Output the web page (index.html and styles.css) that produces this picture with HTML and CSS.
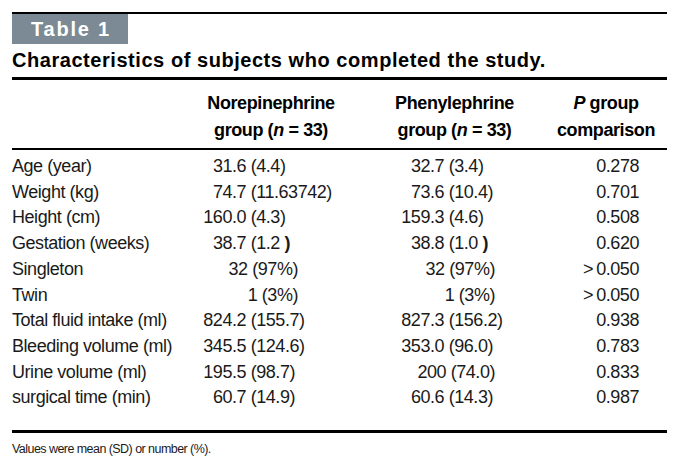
FILE: index.html
```html
<!DOCTYPE html>
<html lang="en">
<head>
<meta charset="utf-8">
<title>Table 1</title>
<link rel="stylesheet" href="styles.css">
</head>
<body>
<div class="page">
  <div class="topbar"><span class="tag">Table 1</span></div>
  <h1 class="title">Characteristics of subjects who completed the study.</h1>
  <table class="data">
    <colgroup>
      <col class="c-label"><col class="c-nor"><col class="c-phe"><col class="c-pv">
    </colgroup>
    <thead>
      <tr>
        <th class="h-label"></th>
        <th class="h-nor">Norepinephrine<br>group (<i>n</i> = 33)</th>
        <th class="h-phe">Phenylephrine<br>group (<i>n</i> = 33)</th>
        <th class="h-pv"><i>P</i> group<br>comparison</th>
      </tr>
    </thead>
    <tbody>
      <tr class="first"><td class="lbl">Age (year)</td><td class="num"><span class="i">31</span>.6 (4.4)</td><td class="num"><span class="i">32</span>.7 (3.4)</td><td class="pv">0.278</td></tr>
      <tr><td class="lbl">Weight (kg)</td><td class="num"><span class="i">74</span>.7 (11.63742)</td><td class="num"><span class="i">73</span>.6 (10.4)</td><td class="pv">0.701</td></tr>
      <tr><td class="lbl">Height (cm)</td><td class="num"><span class="i">160</span>.0 (4.3)</td><td class="num"><span class="i">159</span>.3 (4.6)</td><td class="pv">0.508</td></tr>
      <tr><td class="lbl">Gestation (weeks)</td><td class="num"><span class="i">38</span>.7 (1.2 <span class="par">)</span></td><td class="num"><span class="i">38</span>.8 (1.0 <span class="par">)</span></td><td class="pv">0.620</td></tr>
      <tr><td class="lbl">Singleton</td><td class="cnt-nor">32 (97%)</td><td class="cnt-phe">32 (97%)</td><td class="pv">&gt;&#8201;0.050</td></tr>
      <tr><td class="lbl">Twin</td><td class="cnt-nor">1 (3%)</td><td class="cnt-phe">1 (3%)</td><td class="pv">&gt;&#8201;0.050</td></tr>
      <tr><td class="lbl">Total fluid intake (ml)</td><td class="num"><span class="i">824</span>.2 (155.7)</td><td class="num"><span class="i">827</span>.3 (156.2)</td><td class="pv">0.938</td></tr>
      <tr><td class="lbl">Bleeding volume (ml)</td><td class="num"><span class="i">345</span>.5 (124.6)</td><td class="num"><span class="i">353</span>.0 (96.0)</td><td class="pv">0.783</td></tr>
      <tr><td class="lbl">Urine volume (ml)</td><td class="num"><span class="i">195</span>.5 (98.7)</td><td class="cnt-phe">200 (74.0)</td><td class="pv">0.833</td></tr>
      <tr class="last"><td class="lbl">surgical time (min)</td><td class="num"><span class="i">60</span>.7 (14.9)</td><td class="num"><span class="i">60</span>.6 (14.3)</td><td class="pv">0.987</td></tr>
    </tbody>
  </table>
  <p class="note">Values were mean (SD) or number (%).</p>
</div>
</body>
</html>
```

FILE: styles.css
```css
html, body {
  margin: 0;
  padding: 0;
  background: #ffffff;
}

.page {
  width: 655px;
  padding: 12px 0 0 12px;
  color: #111111;
  font-family: "Liberation Sans", Arial, sans-serif;
}

.topbar {
  border-top: 2px solid #000000;
  display: flex;
}

.tag {
  display: block;
  width: 116px;
  height: 30px;
  box-sizing: border-box;
  padding-left: 19px;
  background: #7b8a94;
  color: #ffffff;
  font-weight: 700;
  font-size: 20px;
  letter-spacing: 1.8px;
  line-height: 30px;
}

.title {
  margin: 0;
  height: 33px;
  line-height: 33px;
  font-weight: 700;
  font-size: 20px;
  letter-spacing: 0.55px;
  color: #000000;
  border-bottom: 3px solid #000000;
}

.data {
  width: 655px;
  table-layout: fixed;
  border-collapse: collapse;
  font-size: 18px;
  letter-spacing: -0.45px;
  border-bottom: 3px solid #000000;
}

.c-label { width: 178px; }
.c-nor { width: 198px; }
.c-phe { width: 157px; }
.c-pv { width: 122px; }

.data th {
  font-weight: 700;
  letter-spacing: -0.4px;
  line-height: 27px;
  padding: 10px 0 4px 0;
  vertical-align: bottom;
  text-align: center;
  white-space: nowrap;
  color: #000000;
  border-bottom: 2px solid #000000;
}

.h-nor { padding-right: 36px !important; }
.h-phe { padding-right: 24px !important; }

.data td {
  padding: 0;
  line-height: 25.7px;
  white-space: nowrap;
  color: #1a1a1a;
}

.data tr.first td { padding-top: 4px; }
.data tr.last td { padding-bottom: 19px; }

.lbl { text-align: left; }

.num { text-align: left; }

.num .i {
  display: inline-block;
  width: 42px;
  text-align: right;
}

.par {
  font-weight: 700;
}

.cnt-nor {
  text-align: right;
  padding-right: 90px !important;
}

.cnt-phe {
  text-align: right;
  padding-right: 50px !important;
}

.pv {
  text-align: right;
  padding-right: 28px !important;
}

.note {
  margin: 6px 0 0 0;
  font-size: 12.5px;
  letter-spacing: -0.55px;
  line-height: 20px;
  color: #1a1a1a;
}
```
